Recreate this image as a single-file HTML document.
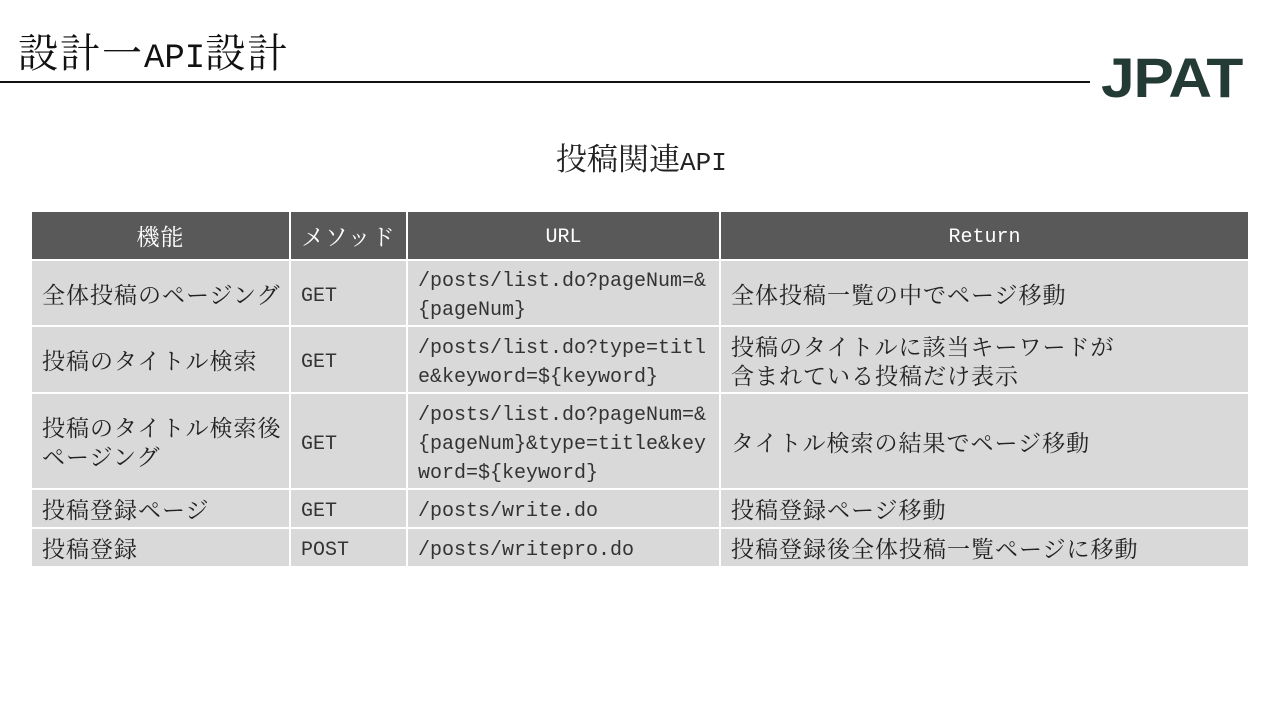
<!DOCTYPE html>
<html><head><meta charset="utf-8"><style>
body{margin:0;width:1280px;height:720px;background:#fff;position:relative;overflow:hidden;font-family:"Liberation Mono","Noto Serif CJK JP",serif;color:#222}
.c{position:absolute;display:flex;align-items:center;box-sizing:border-box;padding-left:10px;background:#d9d9d9;font-size:23px;letter-spacing:1px;line-height:29px;color:#222}
.m{font-family:"Liberation Mono",monospace;font-size:20px;letter-spacing:0;padding-top:6px;color:#333}
.h{background:#595959;color:#fff;justify-content:center;padding-left:0}
.h.m{color:#fff;padding-top:4px}
.j{font-family:"Noto Serif CJK JP",serif}
</style></head><body>
<div style="position:absolute;left:18px;top:24px;font-size:40px;line-height:54px;letter-spacing:2px;font-family:'Noto Serif CJK JP',serif;color:#111">設計一<span style="font-family:'Liberation Mono';font-size:34px;letter-spacing:0">API</span>設計</div>
<div style="position:absolute;left:0;top:81px;width:1090px;height:1.5px;background:#111"></div>
<div style="position:absolute;left:1101px;top:50px;font-family:'Liberation Sans',sans-serif;font-size:56px;font-weight:bold;color:#243a35;letter-spacing:-1px;line-height:56px;transform:scaleX(1.08);transform-origin:left">JPAT</div>
<div style="position:absolute;left:556px;top:137px;font-size:31px;line-height:40px;font-family:'Noto Serif CJK JP',serif;color:#222">投稿関連<span style="font-family:'Liberation Mono';font-size:26px">API</span></div>

<div class="c h j" style="left:32px;top:212px;width:257px;height:47px">機能</div>
<div class="c h j" style="left:291px;top:212px;width:115px;height:47px">メソッド</div>
<div class="c h m" style="left:408px;top:212px;width:311px;height:47px">URL</div>
<div class="c h m" style="left:721px;top:212px;width:527px;height:47px">Return</div>

<div class="c j" style="left:32px;top:261px;width:257px;height:64px">全体投稿のページング</div>
<div class="c m" style="left:291px;top:261px;width:115px;height:64px">GET</div>
<div class="c m" style="left:408px;top:261px;width:311px;height:64px">/posts/list.do?pageNum=&amp;<br>{pageNum}</div>
<div class="c j" style="left:721px;top:261px;width:527px;height:64px">全体投稿一覧の中でページ移動</div>

<div class="c j" style="left:32px;top:327px;width:257px;height:65px">投稿のタイトル検索</div>
<div class="c m" style="left:291px;top:327px;width:115px;height:65px">GET</div>
<div class="c m" style="left:408px;top:327px;width:311px;height:65px">/posts/list.do?type=titl<br>e&amp;keyword=${keyword}</div>
<div class="c j" style="left:721px;top:327px;width:527px;height:65px">投稿のタイトルに該当キーワードが<br>含まれている投稿だけ表示</div>

<div class="c j" style="left:32px;top:394px;width:257px;height:94px">投稿のタイトル検索後<br>ページング</div>
<div class="c m" style="left:291px;top:394px;width:115px;height:94px">GET</div>
<div class="c m" style="left:408px;top:394px;width:311px;height:94px">/posts/list.do?pageNum=&amp;<br>{pageNum}&amp;type=title&amp;key<br>word=${keyword}</div>
<div class="c j" style="left:721px;top:394px;width:527px;height:94px">タイトル検索の結果でページ移動</div>

<div class="c j" style="left:32px;top:490px;width:257px;height:37px">投稿登録ページ</div>
<div class="c m" style="left:291px;top:490px;width:115px;height:37px">GET</div>
<div class="c m" style="left:408px;top:490px;width:311px;height:37px">/posts/write.do</div>
<div class="c j" style="left:721px;top:490px;width:527px;height:37px">投稿登録ページ移動</div>

<div class="c j" style="left:32px;top:529px;width:257px;height:37px">投稿登録</div>
<div class="c m" style="left:291px;top:529px;width:115px;height:37px">POST</div>
<div class="c m" style="left:408px;top:529px;width:311px;height:37px">/posts/writepro.do</div>
<div class="c j" style="left:721px;top:529px;width:527px;height:37px">投稿登録後全体投稿一覧ページに移動</div>
</body></html>
